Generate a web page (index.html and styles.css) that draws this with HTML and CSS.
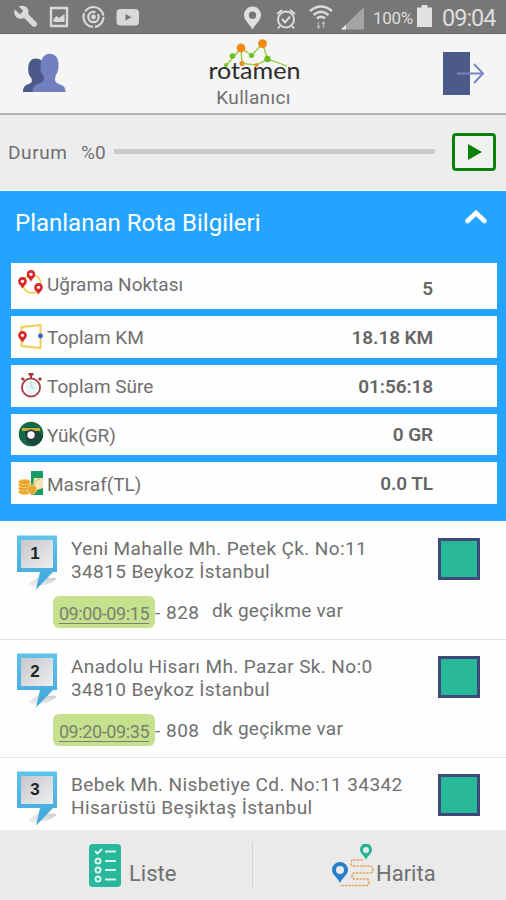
FILE: index.html
```html
<!DOCTYPE html>
<html lang="tr">
<head>
<meta charset="utf-8">
<title>Rotamen</title>
<link rel="stylesheet" href="styles.css">
</head>
<body>
<svg class="defs" width="0" height="0">
  <defs>
    <linearGradient id="frame" x1="0" y1="0" x2="0" y2="1"><stop offset="0" stop-color="#5fc4e8"/><stop offset="1" stop-color="#3fa5de"/></linearGradient>
    <linearGradient id="panel" x1="0" y1="0" x2="1" y2="1"><stop offset="0" stop-color="#c6c8cc"/><stop offset="1" stop-color="#eeeeef"/></linearGradient>
    <linearGradient id="shade" x1="1" y1="0" x2="0" y2="1"><stop offset="0" stop-color="#bbb"/><stop offset="1" stop-color="#eee"/></linearGradient>
    <symbol id="bubble" viewBox="0 0 42 56">
      <path d="M22 42 L40 43 Q38 48 22 51 Q10 52 12 48Z" fill="url(#shade)" opacity=".75"/>
      <path d="M0 .5H40V37H36L19 54.500L23 37H0Z" fill="url(#frame)"/>
      <rect x="4" y="5" width="32" height="28" fill="url(#panel)"/>
    </symbol>
    <symbol id="redpin" viewBox="0 0 8 11">
      <path d="M4 11C3.500 8.500 0 7 0 4a4 4 0 0 1 8 0c0 3-3.500 4.500-4 7Z" fill="#d8262b"/>
      <circle cx="4" cy="4" r="1.500" fill="#fff"/>
    </symbol>
  </defs>
</svg>

<div class="status">
  <svg class="status-left" width="130" height="24" viewBox="0 0 130 24">
    <path d="M.8 4.500 6 9.200l3.300-3.100L4.600 1.300c3.800-1.600 8.500-.3 9.700 3.500.4 1.600.3 2.900-.2 4.300l8.300 8.200c1.500 1.700.4 3.300-.7 4-1.300.8-2.500.6-3.500-.3l-8-8C6.500 14.300 3.200 13.600 1.400 11 .1 9 0 6.500.8 4.500Z" fill="#d9d9d9"/>
    <path d="M37 3h16v18H37Z" fill="none" stroke="#d9d9d9" stroke-width="2.400"/>
    <path d="M39.500 17v-3l3-3 2.500 2 5.500-4v8Z" fill="#d9d9d9"/>
    <circle cx="79.500" cy="12" r="10" fill="none" stroke="#d9d9d9" stroke-width="2.200" stroke-dasharray="14 2 19 2 24 1.800"/>
    <circle cx="79.500" cy="12" r="5.200" fill="none" stroke="#d9d9d9" stroke-width="2.200" stroke-dasharray="26 3"/>
    <circle cx="79.500" cy="12" r="2.400" fill="#d9d9d9"/>
    <rect x="102.500" y="4" width="22.500" height="16.500" rx="4" fill="#d9d9d9"/>
    <path d="m111.500 9 6 3.300-6 3.300Z" fill="#777"/>
  </svg>
  <svg class="status-right" width="122" height="26" viewBox="0 0 122 26">
    <path fill-rule="evenodd" d="M9.500 26C8 21 1 17 1 11a8.500 8.500 0 0 1 17 0c0 6-7 10-8.500 15ZM9.500 7.500a3.700 3.700 0 1 0 0 7.400 3.700 3.700 0 0 0 0-7.400Z" fill="#e0e0e0"/>
    <g fill="none" stroke="#dcdcdc">
      <circle cx="43" cy="15.500" r="8" stroke-width="2"/>
      <path d="m39 15 3 3.500 5-6" stroke-width="2"/>
      <path d="m34 10 5-4m13 4-5-4M37 22l-2 2.500m14-2.500 2 2.500" stroke-width="2"/>
      <path d="M67 7q11-9 22 0M70.500 11q7.500-6.500 15 0M74 14.500q4-3.500 8 0" stroke-width="2.500"/>
      <path d="M75.500 18v6m-1.500-2 1.500 2 1.500-2M80.500 24v-6m-1.500 2 1.500-2 1.500 2" stroke-width="1.200" stroke="#bbb"/>
    </g>
    <path d="M121 3v22.500H98Z" fill="#a4a4a4"/><path d="M103 20.500v5h-5Z" fill="#e6e6e6"/>
  </svg>
  <span class="percent">100%</span>
  <svg class="battery" width="15" height="22" viewBox="0 0 15 22"><path d="M4.500 0h6v2.500H15V22H0V2.500h4.500Z" fill="#e2e2e2"/></svg>
  <span class="clock">09:04</span>
</div>

<header class="header">
  <svg class="users" width="43" height="40" viewBox="0 0 43 40">
    <path d="M0 39c0-6 3-7 7-8.500 2-1 2.500-3 1-6C4 21 3.500 6 12 5.500c6-.5 10 4 9 12L22 39Z" fill="#4c5a89"/>
    <path d="M9.500 39c0-5 2-6.500 6-8 5-2 7-4 4.500-9-2-2-3-5-2.500-8C18 5 21 1 26.500.8 33 .7 36 6 35.500 13c0 4-1 6-2.500 9-2 5-1 7.500 3 9 5 2 6.500 3 6.500 8Z" fill="#7380bf"/>
  </svg>
  <div class="brand">
    <svg width="94" height="44" viewBox="0 0 94 44">
      <g fill="none" stroke="#8bd12a" stroke-width="1.300"><path d="M17 28 33 9l1 15.500 14.500 1.500M33 9l10.500 7.500L54.500 4.500l5 15.500L79 27M48.500 26l11-6"/></g>
      <text class="wordmark" x=".5" y="40" textLength="92" lengthAdjust="spacingAndGlyphs">rotamen</text>
      <circle cx="33" cy="9" r="4.400" fill="#f18a17"/><circle cx="54.500" cy="4.600" r="4.400" fill="#f18a17"/><circle cx="34" cy="24.500" r="2.500" fill="#ed8a22"/><circle cx="48.500" cy="26" r="2" fill="#e9892a"/>
      <circle cx="24.500" cy="17" r="2.800" fill="#69be21"/><circle cx="43.500" cy="16.500" r="2.500" fill="#69be21"/><circle cx="59.500" cy="20" r="3.200" fill="#69be21"/><circle cx="18" cy="26" r="2" fill="#7bc529"/>
    </svg>
    <span class="user">Kullanıcı</span>
  </div>
  <svg class="exit" width="42" height="43" viewBox="0 0 42 43"><path d="M0 0h27v43H0Z" fill="#4c5a89"/><path d="M14 21.500h25M31 12l9 9.500-9 9.500" fill="none" stroke="#7b86c4" stroke-width="2"/></svg>
</header>

<section class="progress">
  <span class="label">Durum</span><span class="value">%0</span>
  <div class="track"></div>
  <button class="play" aria-label="Başlat"><svg width="14" height="16" viewBox="0 0 14 16"><path d="m0 0 14 8-14 8Z" fill="#0b800b"/></svg></button>
</section>

<section class="route">
  <div class="route-head"><h1>Planlanan Rota Bilgileri</h1>
    <svg width="22" height="15" viewBox="0 0 22 15"><path d="m2.500 12 8.500-8 8.500 8" fill="none" stroke="#fff" stroke-width="4.600" stroke-linecap="round"/></svg>
  </div>
  <div class="row first">
    <svg width="26" height="26" viewBox="0 0 26 26"><circle cx="14" cy="14" r="9" fill="none" stroke="#f2cf58" stroke-width="1.800"/><use href="#redpin" x="8.500" y="0" width="9" height="12"/><use href="#redpin" x="0" y="7" width="9" height="12"/><use href="#redpin" x="16" y="13" width="9" height="12"/></svg>
    <span class="name">Uğrama Noktası</span><b>5</b></div>
  <div class="row">
    <svg width="26" height="26" viewBox="0 0 26 26"><path d="M3.500 10V4l19-2v23l-19-2v-6" fill="none" stroke="#f0ce55" stroke-width="2"/><use href="#redpin" x="0" y="8" width="9" height="12"/><circle cx="22.500" cy="13" r="2.400" fill="#2864d4"/></svg>
    <span class="name">Toplam KM</span><b>18.18 KM</b></div>
  <div class="row">
    <svg width="26" height="26" viewBox="0 0 26 26"><circle cx="13" cy="15.500" r="9" fill="#e7f5f7" stroke="#a94446" stroke-width="2"/><circle cx="13" cy="15.500" r="7" fill="none" stroke="#fff" stroke-width="1.500"/><path d="M10.500 1h5v2.500h-1.500V6h-2V3.500h-1.500ZM4 5l3 2-2 2-2-2Zm18 0 2 2-2 2-2-2Z" fill="#9d383b"/><path d="M13 9v6.500h3" fill="none" stroke="#b9d5da"/></svg>
    <span class="name">Toplam Süre</span><b>01:56:18</b></div>
  <div class="row">
    <svg width="26" height="26" viewBox="0 0 26 26"><circle cx="13" cy="13" r="12.300" fill="#166947"/><path d="M9 21 7 9l13 1 5 5a12 12 0 0 1-10 10Z" fill="#124937"/><path d="M4 7h18v3H4Z" fill="#c8ae35"/><circle cx="13" cy="14" r="5.500" fill="#26354a"/><circle cx="13" cy="14" r="3.700" fill="#fff"/></svg>
    <span class="name">Yük(GR)</span><b>0 GR</b></div>
  <div class="row">
    <svg width="26" height="26" viewBox="0 0 26 26"><path d="M13 1h12v24H13Z" fill="#179c67"/><path d="M16 8h9v10l-6 2-4-3Z" fill="#f6e3b1"/><path d="M17 15q-1-5 5-6" fill="none" stroke="#e4b44b"/><g fill="#e6a52f" stroke="#fbd174" stroke-width=".9"><ellipse cx="6.500" cy="22" rx="6" ry="2.600"/><ellipse cx="6.500" cy="18.500" rx="6" ry="2.600"/><ellipse cx="6.500" cy="15" rx="6" ry="2.600"/><ellipse cx="6.500" cy="12" rx="6" ry="2.600"/><circle cx="14" cy="19.500" r="4.600"/></g></svg>
    <span class="name">Masraf(TL)</span><b>0.0 TL</b></div>
</section>

<main class="stops">
  <article class="stop">
    <div class="marker"><svg width="42" height="56"><use href="#bubble"/></svg><b>1</b></div>
    <div class="address">Yeni Mahalle Mh. Petek Çk. No:11<br>34815 Beykoz İstanbul</div>
    <div class="box"></div>
    <div class="delay"><span class="chip">09:00-09:15</span><span class="mins">- 828</span><span class="late">dk geçikme var</span></div>
  </article>
  <article class="stop">
    <div class="marker"><svg width="42" height="56"><use href="#bubble"/></svg><b>2</b></div>
    <div class="address">Anadolu Hisarı Mh. Pazar Sk. No:0<br>34810 Beykoz İstanbul</div>
    <div class="box"></div>
    <div class="delay"><span class="chip">09:20-09:35</span><span class="mins">- 808</span><span class="late">dk geçikme var</span></div>
  </article>
  <article class="stop">
    <div class="marker"><svg width="42" height="56"><use href="#bubble"/></svg><b>3</b></div>
    <div class="address">Bebek Mh. Nisbetiye Cd. No:11 34342<br>Hisarüstü Beşiktaş İstanbul</div>
    <div class="box"></div>
  </article>
</main>

<nav class="tabs">
  <a class="tab list">
    <svg width="32" height="43" viewBox="0 0 32 43"><rect width="32" height="43" rx="4" fill="#27b79b"/><g fill="none" stroke="#d9f4ea" stroke-width="2"><path d="m6 7 2.500 2.500L13 5M16 7.500h11M16 17h11M16 26h11M16 35.500h11"/><circle cx="9" cy="17" r="2.500"/><circle cx="9" cy="26" r="2.500"/><circle cx="9" cy="35" r="2.500"/></g></svg>
    <span>Liste</span></a>
  <a class="tab map">
    <svg width="42" height="45" viewBox="0 0 42 45"><path d="M31 16H22q-3 0-3 3t3 3h15q4 0 4 3.500t-4 3.500H23q-3 0-3 3t3 3h11q3 0 3 3.300t-3 3.200H8" fill="none" stroke="#e6a65d" stroke-width="1.700" stroke-dasharray="2.500 1"/>
    <path fill-rule="evenodd" d="M8 39.500C6.500 34 0 31 0 26a8 8 0 0 1 16 0c0 5-6.500 8-8 13.500Zm0-17.500a4 4 0 1 0 0 8 4 4 0 0 0 0-8Z" fill="#2580c9"/>
    <path fill-rule="evenodd" d="M34 16c-1-4-6-6-6-10.500a6 6 0 0 1 12 0C40 10 35 12 34 16Zm0-13a3 3 0 1 0 0 6 3 3 0 0 0 0-6Z" fill="#25b58f"/></svg>
    <span>Harita</span></a>
</nav>
</body>
</html>
```
FILE: styles.css
```css
* { box-sizing: border-box; }
body { margin: 0; width: 506px; height: 900px; overflow: hidden; background: #fefefe; color: #707070; font: 19px/22px Roboto, sans-serif; display: flex; flex-direction: column; }
svg { display: block; flex: none; }
span, b, h1 { white-space: nowrap; }
.defs { position: absolute; }

.status { height: 34px; flex: none; background: #777; border-bottom: 1px solid #6a6a6a; display: flex; color: #dedede; padding-left: 14px; }
.status-left { margin-top: 5px; }
.status-right { margin: 4px 0 0 99px; }
.percent { width: 43px; margin-left: 8px; font-size: 17px; line-height: 36px; letter-spacing: -.3px; }
.battery { margin: 5px 0 0 1px; }
.clock { margin-left: 10px; font-size: 23.500px; line-height: 36px; letter-spacing: -1px; }

.header { height: 81px; flex: none; background: #f5f5f5; border-bottom: 2px solid #b2b2b2; display: flex; justify-content: space-between; padding: 0 21px 0 23px; }
.users { margin-top: 19px; }
.brand { display: flex; flex-direction: column; align-items: center; margin-top: 5px; }
.wordmark { font: 400 24px Lato, sans-serif; fill: #2c2c2c; }
.user { margin: 4px 2px 0 0; font-size: 19px; letter-spacing: .3px; }
.exit { margin-top: 18px; }

.progress { height: 76px; flex: none; background: #ededed; border-bottom: 1px solid #f6fbff; display: flex; align-items: center; padding: 0 10px 0 8px; }
.label { width: 73px; letter-spacing: .6px; }
.value { width: 33px; }
.track { width: 321px; height: 5px; margin-top: -3px; background: #cbcbcb; }
.play { width: 44px; height: 38px; margin: 0 0 2px auto; border: 3px solid #0b800b; border-radius: 4px; background: #f0f2f0; padding: 0 0 0 2px; display: flex; align-items: center; justify-content: center; }

.route { height: 330px; flex: none; background: #25a4ff; padding: 0 9px 0 11px; display: flex; flex-direction: column; gap: 7px; }
.route-head { height: 65px; margin-right: 1px; display: flex; justify-content: space-between; padding: 18px 9px 0 4px; }
.route-head h1 { margin: 0; color: #fff; font-size: 24px; line-height: 28px; font-weight: 400; }
.row { height: 41.800px; background: #fefefe; display: flex; align-items: center; padding: 2px 64px 0 7px; }
.row.first { height: 46px; padding-top: 0; padding-bottom: 4px; }
.row svg { margin-top: -3px; }
.row b { margin-left: auto; font-weight: 600; letter-spacing: -.1px; color: #666; }
.row .name { margin-left: 3px; margin-top: 1px; }
.row.first b { padding-top: 9px; }

.stops { flex: 1; overflow: hidden; }
.stop { height: 118px; display: grid; grid-template-columns: 54px 367px 42px; grid-template-rows: 75px auto; padding-left: 17px; }
.stop + .stop { box-shadow: inset 0 1px #e3e3e3; }
.marker { padding-top: 14px; position: relative; }
.marker b { position: absolute; left: 0; top: 22px; width: 36px; text-align: center; color: #222; font: 700 17px/22px "Liberation Sans", sans-serif; }
.address { padding-top: 17px; line-height: 22.500px; letter-spacing: .38px; white-space: nowrap; }
.box { width: 42px; height: 42px; margin-top: 17px; border: 3px solid #3d4b7b; background: #28b799; }
.delay { grid-column: 1 / -1; display: flex; padding-left: 36px; }
.chip { width: 102px; height: 32px; border-radius: 6px; background: #c5e18e; color: #798171; text-align: center; line-height: 35px; text-decoration: underline; text-underline-offset: 3px; font-size: 18px; letter-spacing: -.4px; }
.mins { width: 57px; line-height: 33px; letter-spacing: .5px; }
.late { line-height: 29px; letter-spacing: .28px; }

.tabs { height: 70px; flex: none; background: #eaeaea; display: flex; }
.tab { width: 50%; display: flex; font-size: 22px; line-height: 28px; }
.list { padding: 14px 0 0 89px; background: linear-gradient(#d5d5d5, #d5d5d5) 100% 50% / 1px 46px no-repeat; }
.map { padding: 14px 0 0 79px; }
.tab span { margin: 16px 0 0 8px; }
.map span { margin-left: 2px; }
```
